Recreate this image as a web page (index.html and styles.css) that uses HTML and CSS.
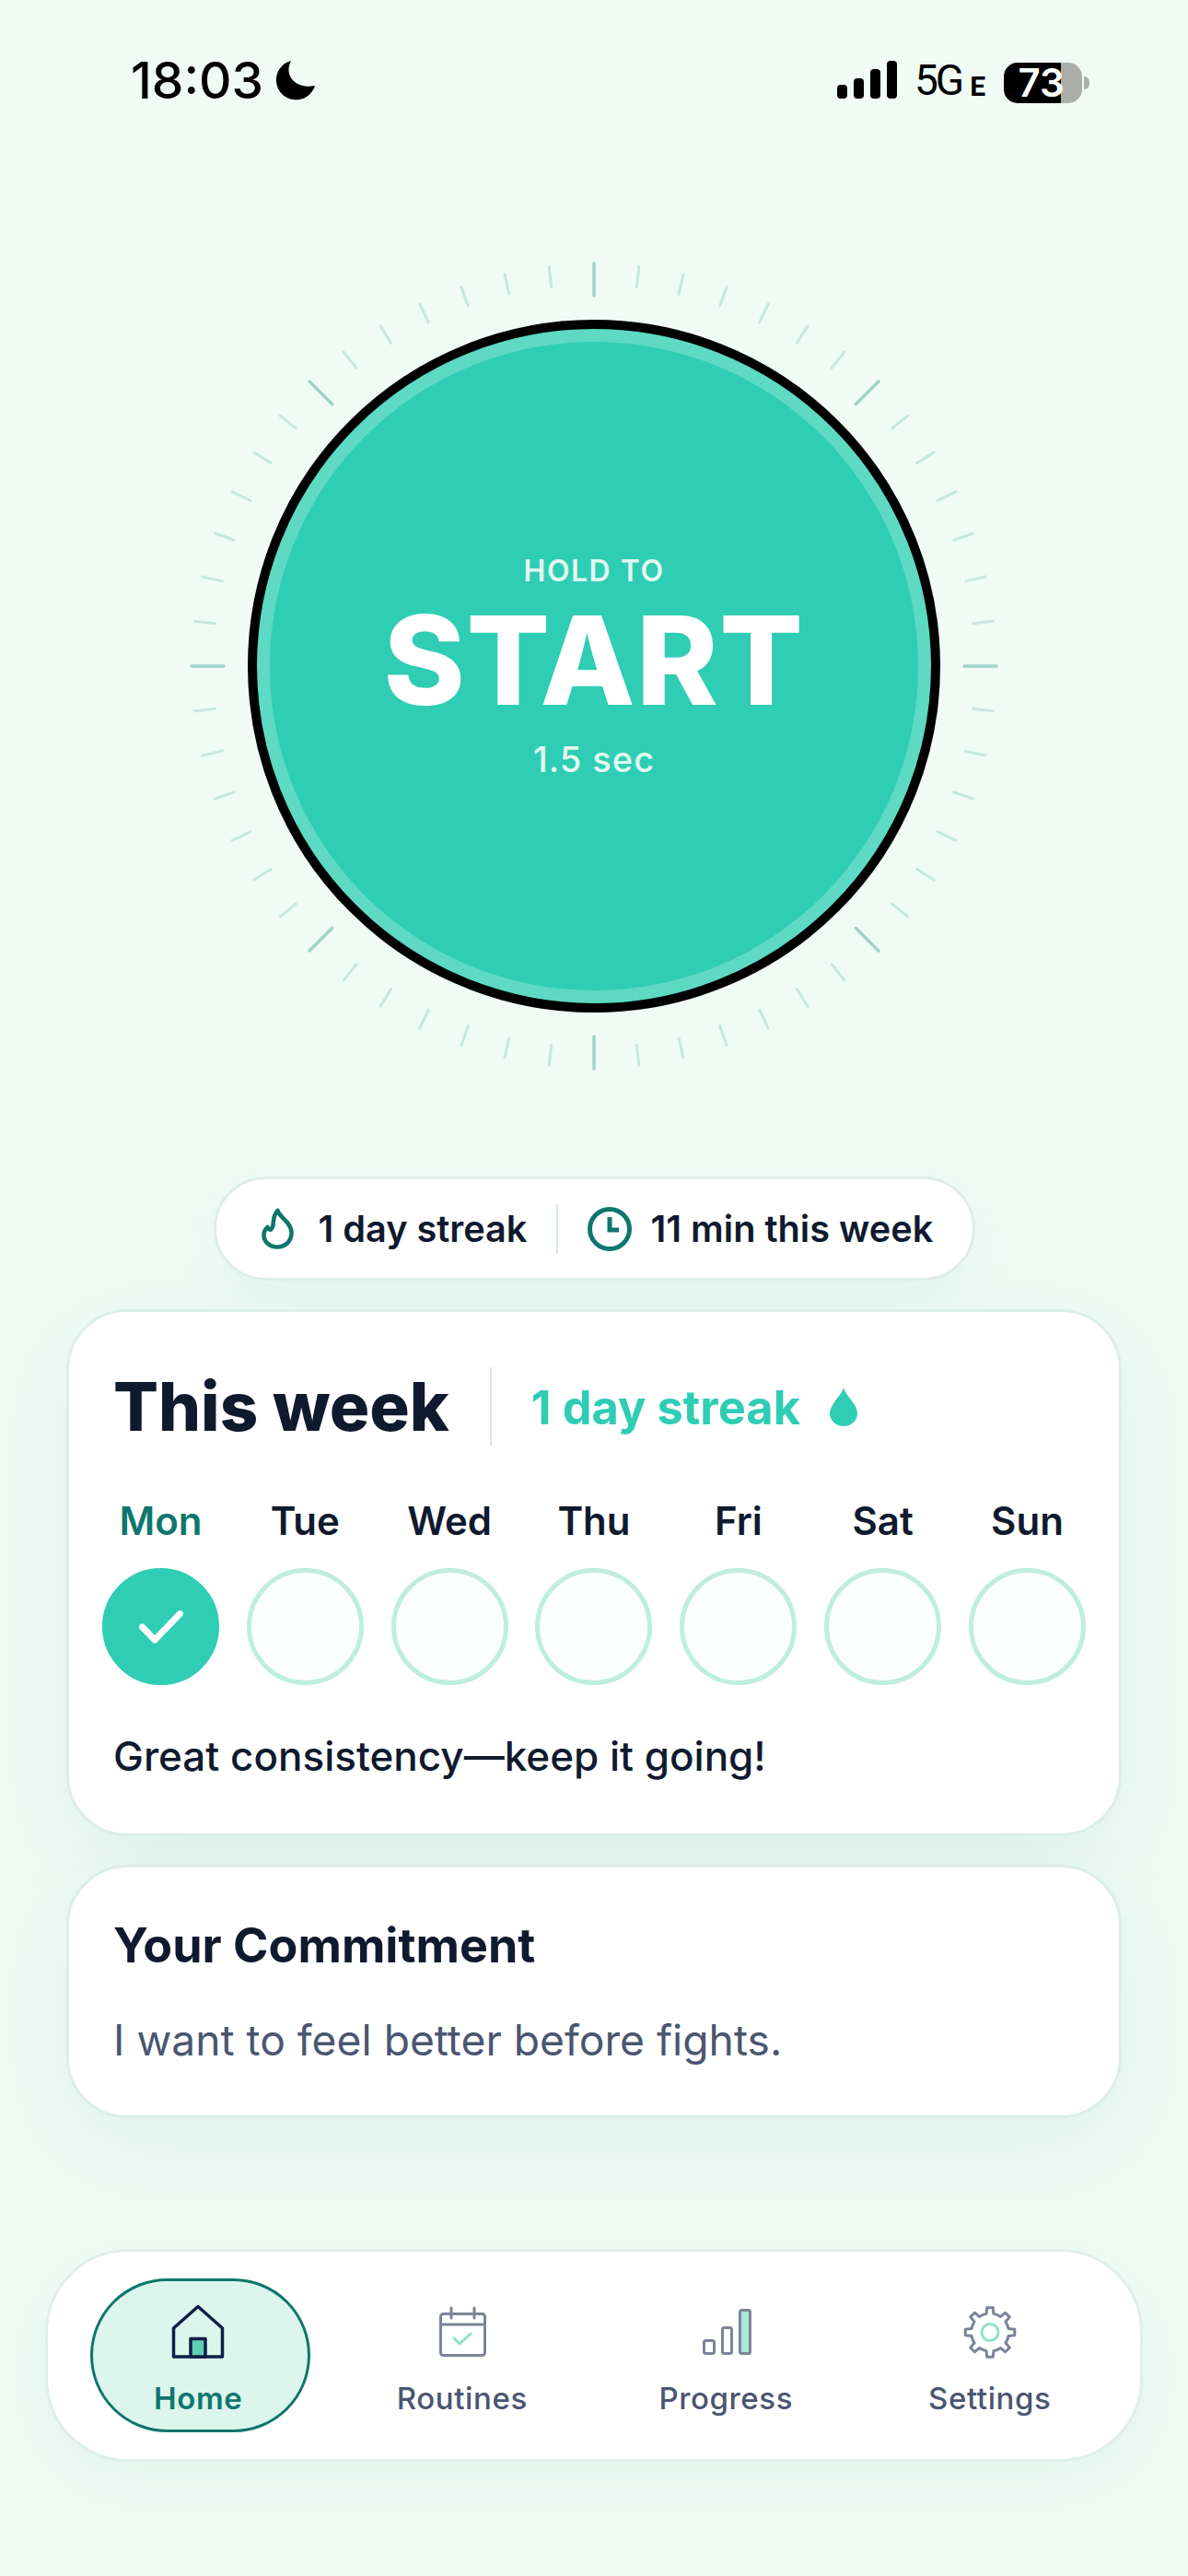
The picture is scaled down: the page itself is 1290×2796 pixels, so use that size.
FILE: index.html
```html
<!DOCTYPE html>
<html lang="en">
<head>
<meta charset="utf-8">
<title>Home</title>
<link rel="stylesheet" href="styles.css">
</head>
<body>
<div class="page">
  <header class="status">
    <div class="status-left">
      <span class="time">18:03</span>
      <svg class="moon" viewBox="0 0 44 44"><path d="M17 1A21.500 21.500 0 1 0 43 28C25 32 8 19 17 1Z"/></svg>
    </div>
    <div class="status-right">
      <div class="signal"><i class="b1"></i><i class="b2"></i><i class="b3"></i><i class="b4"></i></div>
      <span class="net">5G</span><span class="net-e">E</span>
      <div class="battery"><span class="battery-num">73</span></div>
      <i class="battery-nub"></i>
    </div>
  </header>

  <section class="hero">
    <svg class="ticks" viewBox="-440 -440 880 880">
      <defs>
        <g id="oct">
          <line class="major" x1="0" y1="-437" x2="0" y2="-402"/>
          <line class="minor" x1="0" y1="-436" x2="0" y2="-414" transform="rotate(6.429)"/>
          <line class="minor" x1="0" y1="-436" x2="0" y2="-414" transform="rotate(12.857)"/>
          <line class="minor" x1="0" y1="-436" x2="0" y2="-414" transform="rotate(19.286)"/>
          <line class="minor" x1="0" y1="-436" x2="0" y2="-414" transform="rotate(25.714)"/>
          <line class="minor" x1="0" y1="-436" x2="0" y2="-414" transform="rotate(32.143)"/>
          <line class="minor" x1="0" y1="-436" x2="0" y2="-414" transform="rotate(38.571)"/>
        </g>
      </defs>
      <use href="#oct"/>
      <use href="#oct" transform="rotate(45)"/>
      <use href="#oct" transform="rotate(90)"/>
      <use href="#oct" transform="rotate(135)"/>
      <use href="#oct" transform="rotate(180)"/>
      <use href="#oct" transform="rotate(225)"/>
      <use href="#oct" transform="rotate(270)"/>
      <use href="#oct" transform="rotate(315)"/>
    </svg>
    <div class="start">
      <div class="start-hold">HOLD TO</div>
      <div class="start-word">START</div>
      <div class="start-sec">1.5 sec</div>
    </div>
  </section>

  <div class="pill">
    <svg class="ic-flame" viewBox="0 0 36 46"><path d="M17.500 3C19 8 24 11 28 16C31 20 32.500 24 32.500 27C32.500 36 26 42.500 17 42.500C8 42.500 2.500 36 2.500 30C2.500 26 4 23 6.500 21C7.500 23 9 24.500 10.500 23C15 19 10 11 17.500 3Z"/></svg>
    <span class="pill-text">1 day streak</span>
    <i class="pill-div"></i>
    <svg class="ic-clock" viewBox="0 0 48 48"><circle cx="24" cy="24" r="21.500"/><path d="M24 11V25H34"/></svg>
    <span class="pill-text">11 min this week</span>
  </div>

  <section class="card week">
    <div class="week-head">
      <h2 class="week-title">This week</h2>
      <i class="week-div"></i>
      <span class="week-streak">1 day streak</span>
      <svg class="ic-drop" viewBox="0 0 30 42"><path d="M15 0C17 9 30 18 30 28C30 36 23 42 15 42C7 42 0 36 0 28C0 18 13 9 15 0Z"/></svg>
    </div>
    <div class="days">
      <div class="day"><span class="day-name on">Mon</span><span class="dot done"><svg class="ic-check" viewBox="0 0 48 36"><path d="M3.500 18L17 32L44.500 3.500"/></svg></span></div>
      <div class="day"><span class="day-name">Tue</span><span class="dot"></span></div>
      <div class="day"><span class="day-name">Wed</span><span class="dot"></span></div>
      <div class="day"><span class="day-name">Thu</span><span class="dot"></span></div>
      <div class="day"><span class="day-name">Fri</span><span class="dot"></span></div>
      <div class="day"><span class="day-name">Sat</span><span class="dot"></span></div>
      <div class="day"><span class="day-name">Sun</span><span class="dot"></span></div>
    </div>
    <p class="week-note">Great consistency—keep it going!</p>
  </section>

  <section class="card commit">
    <h3 class="commit-title">Your Commitment</h3>
    <p class="commit-text">I want to feel better before fights.</p>
  </section>

  <nav class="nav">
    <div class="tab active">
      <svg class="tab-ic" viewBox="0 0 60 60"><path class="navy" d="M30 3.500L56.500 27V58H3.500V27Z"/><path class="door" d="M22 58V38.500H38V58Z"/></svg>
      <span class="tab-label">Home</span>
    </div>
    <div class="tab">
      <svg class="tab-ic" viewBox="0 0 60 60"><rect class="gray" x="6.500" y="11.500" width="48" height="45" rx="3"/><path class="gray" d="M6.500 23H54.500M18 5V16M43 5V16"/><path class="mint" d="M21 38L27 44L39 33"/></svg>
      <span class="tab-label">Routines</span>
    </div>
    <div class="tab">
      <svg class="tab-ic" viewBox="0 0 60 60"><rect class="gray" x="6.500" y="40.500" width="11" height="14" rx="2"/><rect class="gray" x="26.500" y="26.500" width="10" height="28" rx="2"/><rect class="gray fillmint" x="45.500" y="7.500" width="11" height="47" rx="2"/></svg>
      <span class="tab-label">Progress</span>
    </div>
    <div class="tab">
      <svg class="tab-ic" viewBox="-30 -31.500 60 60"><path class="gray" d="M-3.900 -20.100L-3.300 -26.800H3.300L3.900 -20.100A20.500 20.500 0 0 1 11.460 -16.970L16.620 -21.280L21.280 -16.620L16.970 -11.460A20.500 20.500 0 0 1 20.100 -3.900L26.800 -3.300V3.300L20.100 3.900A20.500 20.500 0 0 1 16.970 11.460L21.280 16.620L16.620 21.280L11.460 16.970A20.500 20.500 0 0 1 3.900 20.100L3.300 26.800H-3.300L-3.900 20.100A20.500 20.500 0 0 1 -11.460 16.970L-16.620 21.280L-21.280 16.620L-16.970 11.460A20.500 20.500 0 0 1 -20.100 3.900L-26.800 3.300V-3.300L-20.100 -3.900A20.500 20.500 0 0 1 -16.970 -11.460L-21.280 -16.620L-16.620 -21.280L-11.460 -16.970A20.500 20.500 0 0 1 -3.900 -20.100Z"/><circle class="mint" cx="0" cy="0" r="9"/></svg>
      <span class="tab-label">Settings</span>
    </div>
  </nav>
</div>
</body>
</html>
```
FILE: styles.css
```css
* { box-sizing: border-box; }
html, body { margin: 0; padding: 0; }
body { background: #f0fbf6; font-family: Inter, "Liberation Sans", sans-serif; color: #101a2e; }
.page { width: 1290px; height: 2796px; display: flex; flex-direction: column; align-items: center; overflow: hidden; }

/* status bar */
.status { width: 100%; height: 158px; padding: 62px 107px 0 142px; display: flex; justify-content: space-between; align-items: flex-start; }
.status-left { display: flex; align-items: center; gap: 13px; height: 50px; }
.time { font-size: 55px; line-height: 50px; font-weight: 500; color: #000; letter-spacing: 0; }
.moon { width: 44px; height: 44px; fill: #000; }
.status-right { display: flex; align-items: flex-end; height: 50px; }
.signal { display: flex; align-items: flex-end; gap: 7px; width: 65px; height: 42px; margin: 0 19px 5px 0; }
.signal i { display: block; width: 11px; border-radius: 4px; background: #000; }
.b1 { height: 15px; } .b2 { height: 22px; } .b3 { height: 32px; } .b4 { height: 41px; }
.net { font-family: Roboto, sans-serif; font-size: 46px; line-height: 50px; font-weight: 400; letter-spacing: -3px; color: #000; margin-right: 9px; }
.net-e { font-family: Roboto, sans-serif; font-size: 30px; line-height: 34px; font-weight: 700; color: #000; margin: 0 20px 1px 0; }
.battery { width: 85px; height: 44px; border-radius: 15px; background: linear-gradient(90deg, #000 0 62px, #a9aeaa 62px); display: flex; align-items: center; justify-content: center; }
.battery-num { font-size: 42px; line-height: 44px; font-weight: 600; color: #fff; padding-right: 4px; }
.battery-nub { display: block; width: 6px; height: 14px; border-radius: 0 7px 7px 0; background: #a9aeaa; margin: 0 0 15px 2px; }

/* hold button */
.hero { display: grid; place-items: center; width: 880px; height: 880px; margin-top: 125px; flex: none; }
.hero > * { grid-area: 1 / 1; }
.ticks { width: 880px; height: 880px; }
.major { stroke: #a2d2c9; stroke-width: 3.500; stroke-linecap: round; }
.minor { stroke: #c8e6e0; stroke-width: 3; stroke-linecap: round; }
.start { width: 752px; height: 752px; border-radius: 50%; background: #2fcdb4; border: 10px solid #000; box-shadow: inset 0 0 0 14px #5ed9c3; display: flex; flex-direction: column; align-items: center; justify-content: center; color: #fff; text-align: center; }
.start-hold { font-size: 32px; line-height: 40px; font-weight: 600; letter-spacing: 1.500px; color: #e1f8f2; }
.start-word { font-size: 134px; line-height: 136px; font-weight: 800; letter-spacing: 1.500px; margin-top: 8px; }
.start-sec { font-size: 38px; line-height: 44px; font-weight: 500; letter-spacing: 1px; color: #e1f8f2; margin-top: 18px; }

/* summary pill */
.pill { flex: none; display: flex; align-items: center; width: 827px; height: 113px; margin-top: 114px; padding-left: 49px; background: #fff; border: 3px solid #deeee8; border-radius: 57px; box-shadow: 0 20px 60px rgba(15, 118, 110, .05); }
.ic-flame { width: 36px; height: 46px; fill: none; stroke: #0f766e; stroke-width: 4.600; stroke-linejoin: round; margin-right: 26px; }
.pill-text { font-size: 39.700px; line-height: 48px; font-weight: 600; color: #101a2e; white-space: nowrap; }
.pill-div { width: 2px; height: 54px; background: #d8ebe5; margin: 0 32px; }
.ic-clock { width: 48px; height: 48px; fill: none; stroke: #0f766e; stroke-width: 5; margin-right: 20px; }

/* cards */
.card { flex: none; width: 1146px; background: #fff; border: 3px solid #dceee8; border-radius: 66px; box-shadow: 0 30px 100px rgba(15, 90, 80, .07); }
.week { height: 572px; margin-top: 31px; padding: 0 48px; }
.week-head { display: flex; align-items: center; height: 85px; margin-top: 60px; }
.week-title { margin: 0; font-size: 72.500px; line-height: 85px; font-weight: 800; letter-spacing: 0; color: #101a2e; white-space: nowrap; }
.week-div { width: 2px; height: 85px; background: #dce9e5; margin: 0 43px 0 44px; }
.week-streak { font-size: 50.600px; line-height: 60px; font-weight: 700; color: #2fcdb4; white-space: nowrap; margin-top: 2px; }
.ic-drop { width: 30px; height: 42px; fill: #2fcdb4; margin-left: 32px; }
.days { display: flex; justify-content: space-between; margin: 57px -12px 0 -12px; }
.day { display: flex; flex-direction: column; align-items: center; gap: 26px; width: 127px; }
.day-name { font-size: 42px; line-height: 50px; font-weight: 600; color: #101a2e; }
.day-name.on { color: #0f766e; }
.dot { display: flex; align-items: center; justify-content: center; width: 127px; height: 127px; border-radius: 50%; border: 5.500px solid #bfeee0; background: #fbfefd; }
.dot.done { background: #2fcdb4; border-color: #2fcdb4; }
.ic-check { width: 48px; height: 36px; fill: none; stroke: #fff; stroke-width: 7; stroke-linecap: round; stroke-linejoin: round; }
.week-note { margin: 49px 0 0; font-size: 44px; line-height: 56px; font-weight: 500; color: #101a2e; }
.commit { height: 275px; margin-top: 31px; padding: 0 48px; }
.commit-title { margin: 53px 0 0; font-size: 52px; line-height: 64px; font-weight: 700; color: #101a2e; }
.commit-text { margin: 40px 0 0; font-size: 46.200px; line-height: 60px; font-weight: 400; color: #4a5670; }

/* bottom nav */
.nav { flex: none; display: grid; grid-template-columns: repeat(4, 1fr); align-items: center; width: 1192px; height: 231px; margin-top: 142px; padding: 0 20px; background: #fff; border: 3px solid #e0efe9; border-radius: 90px; box-shadow: 0 20px 60px rgba(15, 90, 80, .05); }
.tab { display: flex; flex-direction: column; align-items: center; justify-content: flex-start; justify-self: center; gap: 23px; width: 239px; height: 167px; padding-top: 24px; border-radius: 84px; border: 3px solid transparent; }
.tab:first-child { margin-left: 4px; padding-right: 4px; }
.tab-ic { width: 60px; height: 60px; fill: none; stroke-linejoin: round; stroke-linecap: round; }
.tab.active { background: #dcf6ed; border-color: #0f766e; }
.tab-label { font-size: 33px; line-height: 40px; font-weight: 500; letter-spacing: .6px; color: #4a5670; }
.active .tab-label { font-weight: 600; color: #0f766e; }
.navy { stroke: #0f1f45; stroke-width: 3.500; }
.door { fill: #5ecfb5; stroke: #0f1f45; stroke-width: 3.500; }
.gray { stroke: #7d8499; stroke-width: 3; }
.mint { stroke: #8ee2c9; stroke-width: 3; }
.fillmint { fill: #a8e8d6; }
```
